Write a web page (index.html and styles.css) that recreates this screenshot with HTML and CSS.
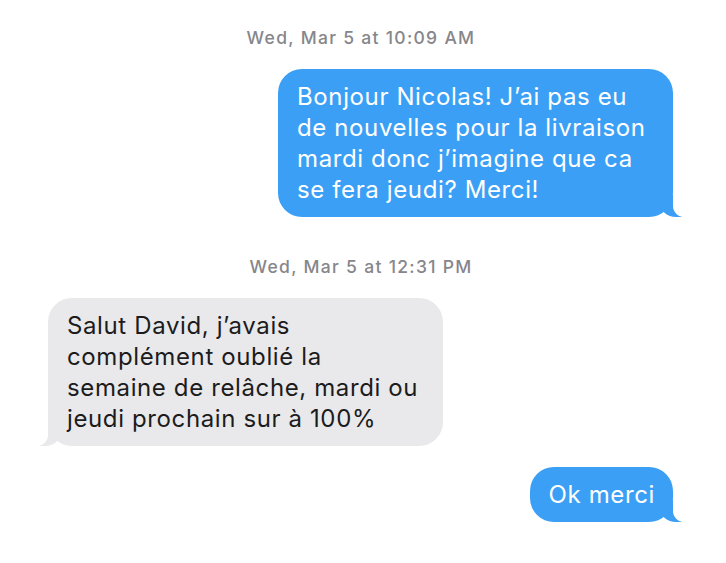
FILE: index.html
```html
<!DOCTYPE html>
<html>
  <head>
    <meta name="viewport" content="width=device-width, initial-scale=1.0" />
    <title>Messages</title>
    <link rel="stylesheet" href="styles.css">
  </head>
  <body>
    <div id="thread">
      <div class="stamp">Wed, Mar 5 at 10:09 AM</div>
      <div class="row row-sent">
        <div class="bubble sent bubble-wide">Bonjour Nicolas! J’ai pas eu<br>de nouvelles pour la livraison<br>mardi donc j’imagine que ca<br>se fera jeudi? Merci!</div>
      </div>
      <div class="stamp stamp-second">Wed, Mar 5 at 12:31 PM</div>
      <div class="row row-received">
        <div class="bubble received bubble-wide">Salut David, j’avais<br>complément oublié la<br>semaine de relâche, mardi ou<br>jeudi prochain sur à 100%</div>
      </div>
      <div class="row row-sent">
        <div class="bubble sent">Ok merci</div>
      </div>
    </div>
  </body>
</html>
```

FILE: styles.css
```css
body {
  background-color: #fff;
  margin: 0;
  padding: 0;
  font-family: Inter, "Liberation Sans", Arial, sans-serif;
}

#thread {
  display: flex;
  flex-direction: column;
  padding: 28px 53px 0 48px;
}

.stamp {
  text-align: center;
  font-size: 17.5px;
  font-weight: 500;
  line-height: 20px;
  letter-spacing: 1.3px;
  color: #86868b;
  padding-left: 1px;
}

.stamp-second {
  margin-top: 40px;
}

.row {
  display: flex;
  margin-top: 21px;
}

.row-sent {
  justify-content: flex-end;
}

.row-received {
  justify-content: flex-start;
}

.bubble {
  position: relative;
  box-sizing: border-box;
  font-size: 24px;
  line-height: 31px;
  letter-spacing: 0.62px;
  white-space: nowrap;
  padding: 12px 18px 12px 19px;
  border-radius: 24px;
}

.bubble-wide {
  width: 395px;
}

.sent {
  background-color: #3b9ff5;
  color: #fff;
}

.received {
  background-color: #e9e9eb;
  color: #1c1c1c;
}

/* tails */
.sent::before,
.sent::after,
.received::before,
.received::after {
  content: "";
  position: absolute;
  bottom: 0;
  height: 22px;
}

.sent::before {
  right: -9px;
  width: 22px;
  background-color: #3b9ff5;
  border-bottom-left-radius: 16px 14px;
}

.sent::after {
  right: -27px;
  width: 27px;
  background-color: #fff;
  border-bottom-left-radius: 11px;
}

.received::before {
  left: -9px;
  width: 22px;
  background-color: #e9e9eb;
  border-bottom-right-radius: 16px 14px;
}

.received::after {
  left: -27px;
  width: 27px;
  background-color: #fff;
  border-bottom-right-radius: 11px;
}
```
